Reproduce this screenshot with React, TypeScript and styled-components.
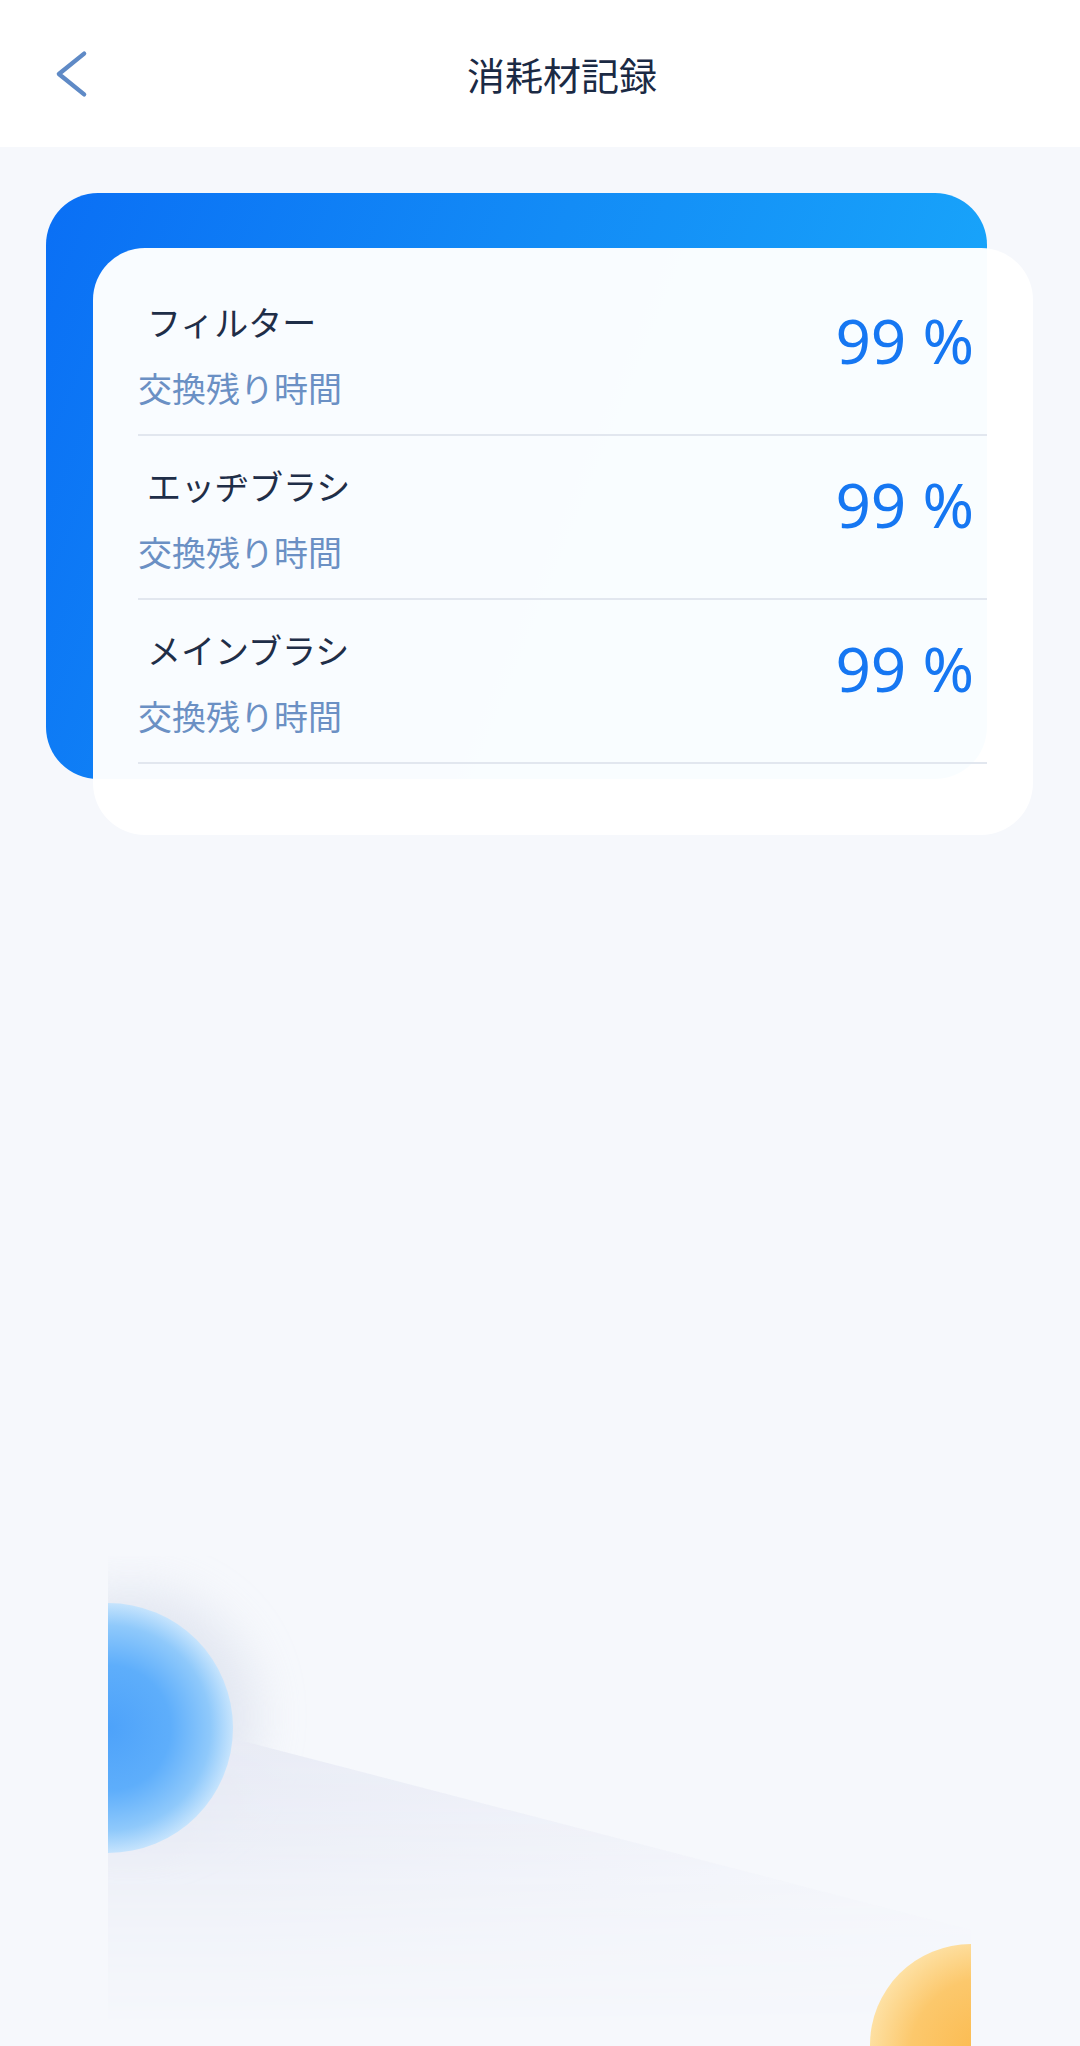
import React from 'react';
import styled, { createGlobalStyle } from 'styled-components';

const GlobalStyle = createGlobalStyle`
  html, body {
    margin: 0;
    padding: 0;
    background: #f6f8fc;
  }
  body {
    font-family: "Noto Sans CJK JP", "Noto Sans", sans-serif;
  }
`;

interface Consumable {
  name: string;
  remaining: number;
}

const items: Consumable[] = [
  { name: 'フィルター', remaining: 99 },
  { name: 'エッヂブラシ', remaining: 99 },
  { name: 'メインブラシ', remaining: 99 },
];

const Page = styled.div`
  min-height: 100vh;
  display: flex;
  flex-direction: column;
  background: #f6f8fc;
  overflow: hidden;
`;

const Header = styled.header`
  height: 147px;
  background: #ffffff;
  display: flex;
  align-items: center;
`;

const BackButton = styled.button`
  flex: none;
  width: 88px;
  height: 60px;
  padding: 0 0 0 55px;
  border: 0;
  background: none;
  display: flex;
  align-items: center;
  cursor: pointer;
`;

const Title = styled.h1`
  flex: 1;
  margin: 0 44px 0 0;
  text-align: center;
  font-size: 38px;
  font-weight: 400;
  line-height: 52px;
  color: #1b2a44;
  font-family: "Noto Sans CJK JP", sans-serif;
`;

const CardStack = styled.section`
  display: grid;
  margin: 46px 47px 0 46px;
`;

const BlueCard = styled.div`
  grid-area: 1 / 1;
  margin: 0 46px 56px 0;
  border-radius: 52px;
  background: linear-gradient(112deg, #0a6ff5 0%, #138cf6 45%, #1aaefc 100%);
`;

const WhiteCard = styled.div`
  grid-area: 1 / 1;
  margin: 55px 0 0 47px;
  border-radius: 52px;
  background: rgba(255, 255, 255, 0.975);
  padding: 24px 46px 71px 45px;
`;

const Row = styled.div`
  display: flex;
  justify-content: space-between;
  align-items: flex-start;
  padding: 26px 13px 22px 0;
  border-bottom: 2px solid #e2e7ef;
`;

const Info = styled.div`
  display: flex;
  flex-direction: column;
`;

const Name = styled.div`
  padding-left: 9px;
  font-size: 34px;
  line-height: 48px;
  color: #1f2e48;
`;

const Caption = styled.div`
  margin-top: 18px;
  font-size: 34px;
  line-height: 48px;
  color: #6b90c4;
`;

const Percent = styled.div`
  margin-top: 10px;
  font-family: "Noto Sans", sans-serif;
  font-size: 62px;
  line-height: 64px;
  color: #1677f2;
  white-space: nowrap;
`;

const Decoration = styled.svg`
  display: block;
  margin-top: auto;
  margin-left: 108px;
  flex: none;
`;

function Backdrop() {
  return (
    <Decoration width="863" height="490" viewBox="0 0 863 490">
      <defs>
        <filter id="halo" x="-50%" y="-50%" width="200%" height="200%">
          <feGaussianBlur stdDeviation="24" />
        </filter>
        <linearGradient id="beam" x1="120" y1="0" x2="863" y2="0" gradientUnits="userSpaceOnUse">
          <stop offset="0" stopColor="#e8ebf5" />
          <stop offset="0.5" stopColor="#eef0f8" />
          <stop offset="1" stopColor="#f4f6fb" />
        </linearGradient>
        <linearGradient id="beamFade" x1="0" y1="180" x2="0" y2="470" gradientUnits="userSpaceOnUse">
          <stop offset="0" stopColor="#ffffff" />
          <stop offset="0.25" stopColor="#d0d0d0" />
          <stop offset="0.65" stopColor="#555555" />
          <stop offset="1" stopColor="#000000" />
        </linearGradient>
        <mask id="beamMask" maskUnits="userSpaceOnUse" x="0" y="0" width="863" height="490">
          <rect x="0" y="0" width="863" height="490" fill="url(#beamFade)" />
        </mask>
        <radialGradient id="blueBall" cx="0" cy="172" r="125" gradientUnits="userSpaceOnUse">
          <stop offset="0" stopColor="#4da2fa" />
          <stop offset="0.5" stopColor="#5eaefb" />
          <stop offset="0.82" stopColor="#8fc9fb" />
          <stop offset="1" stopColor="#c6e4fd" />
        </radialGradient>
        <radialGradient id="orangeBall" cx="880" cy="500" r="130" gradientUnits="userSpaceOnUse">
          <stop offset="0" stopColor="#fbb94c" />
          <stop offset="0.6" stopColor="#fcc86c" />
          <stop offset="1" stopColor="#fee6b0" />
        </radialGradient>
      </defs>
      <circle cx="22" cy="160" r="126" fill="#d9dfec" opacity="0.7" filter="url(#halo)" />
      <polygon points="0,172 123,182 863,374 863,467 0,467" fill="url(#beam)" mask="url(#beamMask)" />
      <circle cx="0" cy="172" r="125" fill="url(#blueBall)" />
      <circle cx="863" cy="489" r="101" fill="url(#orangeBall)" />
    </Decoration>
  );
}

export default function App() {
  return (
    <>
      <GlobalStyle />
      <Page>
        <Header>
          <BackButton type="button" aria-label="戻る">
            <svg width="34" height="52" viewBox="0 0 34 52">
              <path d="M30 5 L4 26 L30 47" fill="none" stroke="#5f8ac6" strokeWidth="4.5" strokeLinecap="round" strokeLinejoin="round" />
            </svg>
          </BackButton>
          <Title>消耗材記録</Title>
        </Header>

        <CardStack>
          <BlueCard />
          <WhiteCard>
            {items.map((item) => (
              <Row key={item.name}>
                <Info>
                  <Name>{item.name}</Name>
                  <Caption>交換残り時間</Caption>
                </Info>
                <Percent>{item.remaining} %</Percent>
              </Row>
            ))}
          </WhiteCard>
        </CardStack>

        <Backdrop />
      </Page>
    </>
  );
}
